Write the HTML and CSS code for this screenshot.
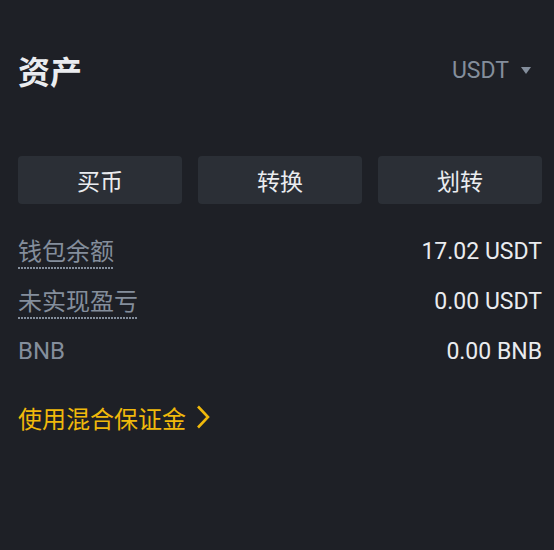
FILE: index.html
```html
<!DOCTYPE html>
<html lang="zh-CN">
<head>
    <meta charset="UTF-8">
    <title>资产</title>
    <link rel="stylesheet" href="styles.css">
</head>
<body>
    <div class="assets">
        <header class="assets-head">
            <h3 class="assets-title">资产</h3>
            <div class="coin-select">
                <span>USDT</span>
                <svg class="caret" width="10" height="7" viewBox="0 0 10 7"><path d="M0 0h10L5 7z" fill="#848e9c"/></svg>
            </div>
        </header>

        <div class="actions">
            <button>买币</button>
            <button>转换</button>
            <button>划转</button>
        </div>

        <div class="rows">
            <div class="row">
                <span class="label tip">钱包余额</span>
                <span class="value">17.02 USDT</span>
            </div>
            <div class="row">
                <span class="label tip">未实现盈亏</span>
                <span class="value">0.00 USDT</span>
            </div>
            <div class="row">
                <span class="label">BNB</span>
                <span class="value">0.00 BNB</span>
            </div>
        </div>

        <a class="more" href="#">
            使用混合保证金
            <svg width="14" height="24" viewBox="0 0 14 24"><path d="M2 1.5l10 10.5-10 10.5" fill="none" stroke="#f0b90b" stroke-width="2.6"/></svg>
        </a>
    </div>
</body>
</html>
```

FILE: styles.css
```css
* {
    padding: 0;
    margin: 0;
    box-sizing: border-box;
}

body {
    background: #1e2026;
    font-family: Roboto, "Noto Sans CJK SC", sans-serif;
    color: #eaecef;
}

.assets {
    padding: 53px 12px 0 18px;
}

.assets-head {
    height: 40px;
    display: flex;
    align-items: center;
    justify-content: space-between;
}

.assets-title {
    font-size: 32px;
    font-weight: 700;
    line-height: 40px;
}

.coin-select {
    display: flex;
    align-items: center;
    gap: 12px;
    padding-right: 11px;
    margin-bottom: 6px;
    color: #848e9c;
    font-size: 23px;
}

.actions {
    margin-top: 63px;
    display: grid;
    grid-template-columns: repeat(3, 1fr);
    gap: 16px;
}

.actions button {
    height: 48px;
    border: none;
    border-radius: 4px;
    background: #2b2f36;
    color: #eaecef;
    font-family: inherit;
    font-size: 23px;
}

.rows {
    margin-top: 22px;
}

.row {
    height: 50px;
    display: flex;
    align-items: center;
    justify-content: space-between;
}

.label {
    color: #848e9c;
    font-size: 24px;
    line-height: 30px;
}

.tip {
    margin-top: 4px;
    padding-bottom: 2px;
    background-image: linear-gradient(to right, #848e9c 60%, transparent 0);
    background-size: 3px 2px;
    background-repeat: repeat-x;
    background-position: left bottom;
}

.value {
    font-size: 23px;
}

.more {
    margin-top: 26px;
    display: flex;
    align-items: center;
    gap: 10px;
    height: 30px;
    color: #f0b90b;
    font-size: 24px;
    text-decoration: none;
}
```
